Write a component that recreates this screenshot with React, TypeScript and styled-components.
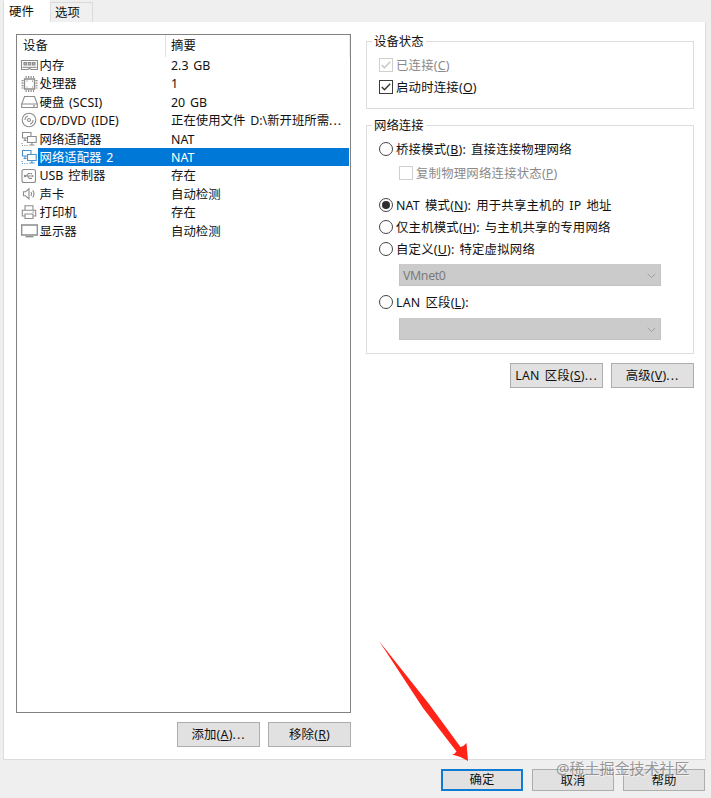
import React from 'react';
import styled, { createGlobalStyle } from 'styled-components';

/* ───────────── base ───────────── */

const GlobalStyle = createGlobalStyle`
	*, *::before, *::after { box-sizing: border-box; }
	body {
		margin: 0;
		background: #efefef;
		font-family: 'Noto Sans', 'Noto Sans CJK SC', sans-serif;
		font-size: 12.4px;
		line-height: 18px;
		word-spacing: 1.6px;
		color: #111;
		overflow: hidden;
	}
	button { font: inherit; color: inherit; word-spacing: inherit; }
	u { text-underline-offset: 1px; text-decoration-thickness: 1px; }
`;

const Dialog = styled.div`
	position: relative;
	display: flex;
	flex-direction: column;
	width: 711px;
	height: 798px;
	overflow: hidden;
	background: #efefef;
`;

/* ───────────── tabs ───────────── */

const TabBar = styled.div`
	display: flex;
	align-items: flex-end;
	height: 22px;
	padding-left: 3px;
`;

const Tab = styled.button<{ $active?: boolean }>`
	width: ${({ $active }) => ($active ? 47 : 43)}px;
	height: ${({ $active }) => ($active ? 22 : 20)}px;
	padding: 0 0 0 ${({ $active }) => ($active ? 5 : 4)}px;
	border: 1px solid ${({ $active }) => ($active ? '#fff' : '#dadada')};
	border-left-color: #dcdcdc;
	border-bottom: 0;
	background: ${({ $active }) => ($active ? '#fff' : '#f0f0f0')};
	line-height: ${({ $active }) => ($active ? 20 : 19)}px;
	text-align: left;
	white-space: nowrap;
`;

const Page = styled.div`
	display: flex;
	gap: 15px;
	width: 703px;
	height: 738px;
	margin-left: 3px;
	padding: 12px 0 0 12px;
	background: #fff;
	border: 1px solid #dcdcdc;
	border-top: 0;
`;

/* ───────────── device list ───────────── */

const DeviceColumn = styled.div`
	width: 335px;
`;

const DeviceList = styled.div`
	height: 679px;
	border: 1px solid #828282;
	background: #fff;
`;

const ListHeader = styled.div`
	display: grid;
	grid-template-columns: 148px 1fr;
	height: 21px;
	line-height: 22px;

	span { padding-left: 6px; }
	span + span {
		padding-left: 5px;
		border-left: 1px solid #e0e0e0;
		border-right: 1px solid #ececec;
	}
`;

const Row = styled.div`
	display: grid;
	grid-template-columns: 21px 128px 1fr;
	height: 18.4px;
	padding-right: 1px;
	line-height: 19.6px;
	white-space: nowrap;
`;

const IconCell = styled.span<{ $selected?: boolean }>`
	display: flex;
	align-items: center;
	padding-left: 4px;
	color: ${({ $selected }) => ($selected ? '#4a94cf' : '#8c8c8c')};

	svg { display: block; overflow: visible; }
`;

const Cell = styled.span<{ $selected?: boolean }>`
	height: 18px;
	padding-left: 1.5px;
	overflow: hidden;
	color: ${({ $selected }) => ($selected ? '#fff' : 'inherit')};
	background: ${({ $selected }) => ($selected ? '#0078d7' : 'transparent')};

	& + & { padding-left: 5px; }
`;

const Dots = styled.span`
	letter-spacing: 1px;

	&::before { content: '...'; }
`;

/* ───────────── settings ───────────── */

const Settings = styled.div`
	width: 328px;
	padding-top: 7px;
`;

const Group = styled.section<{ $height: number }>`
	display: flex;
	flex-direction: column;
	height: ${({ $height }) => $height}px;
	margin-bottom: 16px;
	padding-left: 12px;
	border: 1px solid #dcdcdc;
`;

const Legend = styled.h2`
	align-self: flex-start;
	flex: none;
	height: 18px;
	margin: -9px 0 3px -7px;
	padding: 0 2px;
	background: #fff;
	font-size: inherit;
	font-weight: 400;
`;

const Option = styled.label<{ $disabled?: boolean; $indent?: boolean; $top?: number }>`
	display: flex;
	flex: none;
	align-items: center;
	gap: 3px;
	height: 22px;
	margin: ${({ $top = 0 }) => $top}px 0 0 ${({ $indent }) => ($indent ? 20 : 0)}px;
	letter-spacing: 0.2px;
	color: ${({ $disabled }) => ($disabled ? '#8a8a8a' : 'inherit')};
	white-space: nowrap;
`;

const OptionText = styled.span`
	padding-top: 1px;
`;

const Box = styled.span<{ $disabled?: boolean }>`
	display: flex;
	align-items: center;
	justify-content: center;
	width: 14px;
	height: 14px;
	border: 1px solid ${({ $disabled }) => ($disabled ? '#cfcfcf' : '#3c3c3c')};
	color: ${({ $disabled }) => ($disabled ? '#c4c4c4' : '#333')};
	background: #fff;
`;

const Dot = styled.span<{ $on?: boolean }>`
	display: flex;
	align-items: center;
	justify-content: center;
	width: 14px;
	height: 14px;
	border: 1px solid #444;
	border-radius: 50%;
	background: #fff;

	&::after {
		content: '';
		width: 8px;
		height: 8px;
		border-radius: 50%;
		background: ${({ $on }) => ($on ? '#2e2e2e' : 'transparent')};
	}
`;

const Select = styled.div<{ $top: number }>`
	display: flex;
	flex: none;
	align-items: center;
	justify-content: space-between;
	width: 262px;
	height: 22px;
	margin: ${({ $top }) => $top}px 0 0 20px;
	padding: 1px 4px 0 3px;
	border: 1px solid #c3c3c3;
	border-top-color: #cbcbcb;
	background: #cbcbcb;
	color: #7b7b7b;
	letter-spacing: -0.4px;
`;

/* ───────────── buttons ───────────── */

const Buttons = styled.div<{ $top?: number; $right?: number; $gap?: number }>`
	display: flex;
	justify-content: flex-end;
	gap: ${({ $gap = 8 }) => $gap}px;
	margin: ${({ $top = 9 }) => $top}px ${({ $right = 0 }) => $right}px 0 0;
`;

const Button = styled.button<{ $width?: number; $footer?: boolean; $primary?: boolean }>`
	width: ${({ $width = 83 }) => $width}px;
	height: ${({ $footer }) => ($footer ? 22 : 25)}px;
	padding: ${({ $footer, $primary }) => ($footer && !$primary ? 1 : 0)}px 0 0;
	border: ${({ $primary }) => ($primary ? '2px solid #0f7bd2' : '1px solid #adadad')};
	background: #e1e1e1;
	line-height: 18px;
	letter-spacing: ${({ $footer }) => ($footer ? 0 : 0.2)}px;
	white-space: nowrap;
`;

/* ───────────── overlays ───────────── */

const Watermark = styled.div`
	position: absolute;
	left: 556px;
	top: 758px;
	font-size: 15px;
	line-height: 20px;
	color: rgba(100, 100, 100, 0.65);
	text-shadow: 1px 1px 0 rgba(255, 255, 255, 0.5);
	white-space: nowrap;
	pointer-events: none;
`;

const Arrow = styled.svg`
	position: absolute;
	left: 375px;
	top: 636px;
	pointer-events: none;
`;

/* ───────────── icons ───────────── */

const Icon: React.FC<{ children: React.ReactNode }> = ({ children }) => (
	<svg width="17" height="16" viewBox="0 0 17 16" fill="none" stroke="currentColor" strokeWidth="1.1">
		{children}
	</svg>
);

const icons = {
	memory: (
		<Icon>
			<path d="M.5 3.500h16v9H10l-1-1H8l-1 1H.5z" />
			<path d="M3 5.500h2.500v2.500H3zM7.300 5.500h2.500v2.500H7.300zM11.500 5.500H14v2.500h-2.500z" fill="#b5b5b5" />
			<path d="M1.500 10.300h14" />
		</Icon>
	),
	cpu: (
		<Icon>
			<path d="M3.500 3h10v10h-10z" strokeWidth="1.3" />
			<path d="M4.500 1h8.500M4.500 15h8.500" strokeWidth="2" strokeDasharray="1.2 1.3" />
			<path d="M1.500 4v8.500M15.500 4v8.500" strokeWidth="2" strokeDasharray="1.2 1.3" />
			<path d="M5.500 5.200h1M5.500 11h1M11 11h1M11 5.200h1" strokeWidth="1.2" />
		</Icon>
	),
	disk: (
		<Icon>
			<path d="M3.500 2.500h10l2.800 7.500v3.500H.7V10z" />
			<path d="M.7 10h15.600M12 11.900h2" />
		</Icon>
	),
	disc: (
		<Icon>
			<circle cx="8" cy="8" r="6.800" />
			<circle cx="8" cy="8" r="1.500" />
			<path d="M4 8a4 4 0 0 1 3-4M12 8a4 4 0 0 1-3 4" />
		</Icon>
	),
	network: (
		<Icon>
			<path d="M1.500 1.500h8.500v5.500H1.500z" />
			<path d="M6.500 5.500h8.700v6H6.500z" fill="#fff" />
			<path d="M10.900 11.500v2.500M8.300 14h5.200M4 7v2.500M2.500 9.500h3" />
			<path d="M1 12v2M1 14.500h6" strokeDasharray="1 1.3" />
		</Icon>
	),
	usb: (
		<Icon>
			<rect x="1" y="1.500" width="13.500" height="13" rx="2" />
			<path d="M3.500 8h8M5.500 8l2-2.500h2M6.500 8l1.800 2.500H10" />
			<path d="M11 6.700 13 8l-2 1.300zM9.500 5h1.500v1.300H9.500zM9.500 9.800H11V11H9.500z" fill="currentColor" stroke="none" />
			<circle cx="4" cy="8" r="1.200" fill="currentColor" stroke="none" />
		</Icon>
	),
	sound: (
		<Icon>
			<path d="M2.500 5.800h2l3.500-3v10l-3.500-3h-2z" />
			<path d="M10 6q1.300 2 0 4M11.700 4.300q2.600 3.500 0 7" />
		</Icon>
	),
	printer: (
		<Icon>
			<path d="M4 6V1.800h8V6M3.800 12H1.300V6.300h13.400V12h-2.500" />
			<path d="M4 10h8v4.500H4zM11.500 8h1.500" />
		</Icon>
	),
	display: (
		<Icon>
			<path d="M.7 2h15.600v10H.7z" strokeWidth="1.300" />
			<path d="M4.500 13.700h8" strokeWidth="1.300" />
		</Icon>
	),
};

const Check = () => (
	<svg width="12" height="12" viewBox="0 0 12 12" fill="none" stroke="currentColor" strokeWidth="1.400">
		<path d="m1.800 6 2.700 2.800 5.700-6" />
	</svg>
);

const Chevron = () => (
	<svg width="9" height="6" viewBox="0 0 9 6" fill="none" stroke="#a0a0a0">
		<path d="m.7.8 3.800 3.800L8.300.8" />
	</svg>
);

/* ───────────── data ───────────── */

interface Device {
	icon: keyof typeof icons;
	name: string;
	summary: string;
	truncated?: boolean;
	selected?: boolean;
}

const devices: Device[] = [
	{ icon: 'memory', name: '内存', summary: '2.3 GB' },
	{ icon: 'cpu', name: '处理器', summary: '1' },
	{ icon: 'disk', name: '硬盘 (SCSI)', summary: '20 GB' },
	{ icon: 'disc', name: 'CD/DVD (IDE)', summary: '正在使用文件 D:\\新开班所需', truncated: true },
	{ icon: 'network', name: '网络适配器', summary: 'NAT' },
	{ icon: 'network', name: '网络适配器 2', summary: 'NAT', selected: true },
	{ icon: 'usb', name: 'USB 控制器', summary: '存在' },
	{ icon: 'sound', name: '声卡', summary: '自动检测' },
	{ icon: 'printer', name: '打印机', summary: '存在' },
	{ icon: 'display', name: '显示器', summary: '自动检测' },
];

/* ───────────── app ───────────── */

const App: React.FC = () => (
	<>
		<GlobalStyle />
		<Dialog>
			<TabBar>
				<Tab $active>硬件</Tab>
				<Tab>选项</Tab>
			</TabBar>

			<Page>
				<DeviceColumn>
					<DeviceList>
						<ListHeader>
							<span>设备</span>
							<span>摘要</span>
						</ListHeader>
						{devices.map(({ icon, name, summary, truncated, selected }) => (
							<Row key={name}>
								<IconCell $selected={selected}>{icons[icon]}</IconCell>
								<Cell $selected={selected}>{name}</Cell>
								<Cell $selected={selected}>
									{summary}
									{truncated && <Dots />}
								</Cell>
							</Row>
						))}
					</DeviceList>
					<Buttons>
						<Button>添加(<u>A</u>)<Dots /></Button>
						<Button>移除(<u>R</u>)</Button>
					</Buttons>
				</DeviceColumn>

				<Settings>
					<Group $height={68}>
						<Legend>设备状态</Legend>
						<Option $disabled>
							<Box $disabled><Check /></Box>
							<OptionText>已连接(<u>C</u>)</OptionText>
						</Option>
						<Option>
							<Box><Check /></Box>
							<OptionText>启动时连接(<u>O</u>)</OptionText>
						</Option>
					</Group>

					<Group $height={229}>
						<Legend>网络连接</Legend>
						<Option>
							<Dot />
							<OptionText>桥接模式(<u>B</u>): 直接连接物理网络</OptionText>
						</Option>
						<Option $disabled $indent $top={2}>
							<Box $disabled />
							<OptionText>复制物理网络连接状态(<u>P</u>)</OptionText>
						</Option>
						<Option $top={10}>
							<Dot $on />
							<OptionText>NAT 模式(<u>N</u>): 用于共享主机的 IP 地址</OptionText>
						</Option>
						<Option>
							<Dot />
							<OptionText>仅主机模式(<u>H</u>): 与主机共享的专用网络</OptionText>
						</Option>
						<Option>
							<Dot />
							<OptionText>自定义(<u>U</u>): 特定虚拟网络</OptionText>
						</Option>
						<Select $top={4}>
							VMnet0
							<Chevron />
						</Select>
						<Option $top={5}>
							<Dot />
							<OptionText>LAN 区段(<u>L</u>):</OptionText>
						</Option>
						<Select $top={5}>
							<span />
							<Chevron />
						</Select>
					</Group>

					<Buttons $top={-7}>
						<Button $width={93}>LAN 区段(<u>S</u>)<Dots /></Button>
						<Button>高级(<u>V</u>)<Dots /></Button>
					</Buttons>
				</Settings>
			</Page>

			<Buttons $top={9} $right={6} $gap={9}>
				<Button $width={82} $footer $primary>确定</Button>
				<Button $width={82} $footer>取消</Button>
				<Button $width={82} $footer>帮助</Button>
			</Buttons>

			<Arrow width="100" height="130" viewBox="0 0 100 130">
				<path d="M4 5 54 68l31.500 43q3.500-1 6-4L93 125q-8-5-16-6.500 3-.5 4.500-3L48 72Z" fill="#ff2318" />
			</Arrow>
			<Watermark>@稀土掘金技术社区</Watermark>
		</Dialog>
	</>
);

export default App;
